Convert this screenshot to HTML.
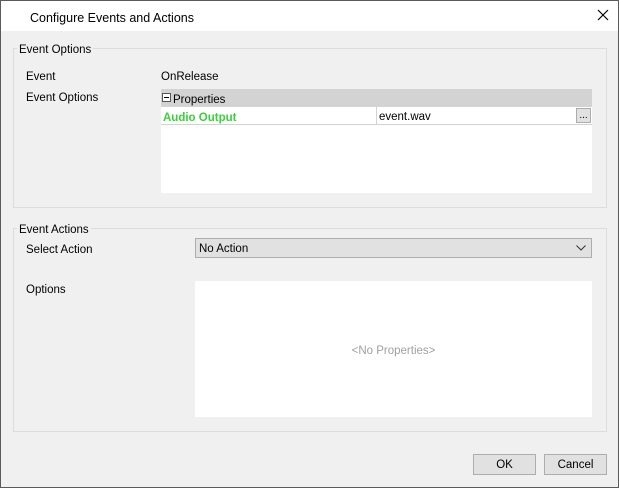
<!DOCTYPE html>
<html><head><style>
*{margin:0;padding:0;box-sizing:border-box}
body{width:619px;height:488px;overflow:hidden;font-family:"Liberation Sans",sans-serif;font-size:11.5px;color:#000;background:#f0f0f0;position:relative}
.frame{position:absolute;left:0;top:0;width:619px;height:488px;border:1px solid #5a5a5a;z-index:10;pointer-events:none}
.title{position:absolute;left:1px;top:1px;width:617px;height:30px;background:#fff}
.a{position:absolute;white-space:nowrap}
.t{margin-top:2px}
.grp{position:absolute;border:1px solid #dcdcdc}
.legend{position:absolute;background:#f0f0f0;padding:0 2px}
.btn{position:absolute;background:#e1e1e1;border:1px solid #adadad;text-align:center;line-height:21px}
</style></head><body>
<div class="frame"></div>
<div class="title"></div>
<div class="a t" style="left:30px;top:9px;font-size:12.5px">Configure Events and Actions</div>
<svg class="a" style="left:597px;top:9px" width="12" height="12"><path d="M1 1L11 11M11 1L1 11" stroke="#000" stroke-width="1.2"/></svg>

<div class="grp" style="left:13px;top:48px;width:594px;height:160px"></div>
<div class="legend t" style="left:17px;top:42px">Event Options</div>
<div class="a t" style="left:26px;top:69px">Event</div>
<div class="a t" style="left:161px;top:69px">OnRelease</div>
<div class="a t" style="left:26px;top:90px">Event Options</div>
<div class="a" style="left:161px;top:89px;width:431px;height:104px;background:#fff"></div>
<div class="a" style="left:161px;top:89px;width:431px;height:18px;background:#d3d3d3"></div>
<div class="a" style="left:162px;top:93px;width:9px;height:9px;border:1px solid #555;background:#fff"></div>
<div class="a" style="left:164px;top:97px;width:5px;height:1px;background:#000"></div>
<div class="a t" style="left:173px;top:92px">Properties</div>
<div class="a t" style="left:163px;top:110px;color:#3ccf3c;font-weight:bold">Audio Output</div>
<div class="a" style="left:161px;top:124px;width:431px;height:1px;background:#d3d3d3"></div>
<div class="a" style="left:376px;top:107px;width:1px;height:17px;background:#d3d3d3"></div>
<div class="a t" style="left:379px;top:109px">event.wav</div>
<div class="btn" style="left:576px;top:108px;width:15px;height:15px;line-height:14px;font-size:10px">...</div>

<div class="grp" style="left:13px;top:228px;width:594px;height:204px"></div>
<div class="legend t" style="left:17px;top:222px">Event Actions</div>
<div class="a t" style="left:26px;top:242px">Select Action</div>
<div class="btn" style="left:195px;top:238px;width:397px;height:20px;text-align:left;padding-left:3px;line-height:20px">No Action</div>
<svg class="a" style="left:576px;top:245px" width="10" height="6"><path d="M0.5 0.5L5 5L9.5 0.5" stroke="#333" fill="none"/></svg>
<div class="a t" style="left:26px;top:282px">Options</div>
<div class="a" style="left:195px;top:281px;width:397px;height:136px;background:#fff"></div>
<div class="a t" style="left:195px;top:343px;width:397px;text-align:center;color:#a0a0a0">&lt;No Properties&gt;</div>

<div class="btn" style="left:473px;top:454px;width:63px;height:21px">OK</div>
<div class="btn" style="left:544px;top:454px;width:63px;height:21px">Cancel</div>
</body></html>
